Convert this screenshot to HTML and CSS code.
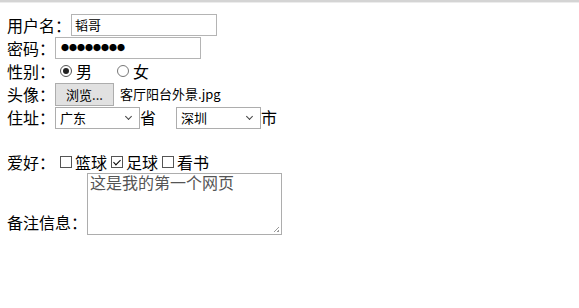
FILE: index.html
```html
<!DOCTYPE html>
<html lang="zh-CN">

<head>
    <meta charset="utf-8">
    <title>注册表单</title>
    <link rel="stylesheet" href="styles.css">
</head>

<body>
    <div class="topbar"></div>
    <form class="form">
        <div class="row">
            <label>用户名：</label><span class="text name">韬哥</span>
        </div>
        <div class="row">
            <label>密码：</label><span class="text pwd">●●●●●●●●</span>
        </div>
        <div class="row">
            <label>性别：</label>
            <span class="radio checked"></span><span>男</span>
            <span class="radio gap"></span><span>女</span>
        </div>
        <div class="row">
            <label>头像：</label><span class="file-btn">浏览...</span><span class="file-name">客厅阳台外景.jpg</span>
        </div>
        <div class="row">
            <label>住址：</label><span class="select">广东<i class="arrow"></i></span><span>省</span>
            <span class="select city">深圳<i class="arrow"></i></span><span>市</span>
        </div>
        <div class="row empty"></div>
        <div class="row">
            <label>爱好：</label>
            <span class="check"></span><span>篮球</span>
            <span class="check checked"></span><span>足球</span>
            <span class="check"></span><span>看书</span>
        </div>
        <div class="row note">
            <label>备注信息：</label>
            <div class="textarea">这是我的第一个网页<i class="grip"></i></div>
        </div>
    </form>
</body>

</html>
```

FILE: styles.css
```css
body {
    margin: 0;
    font-family: "Noto Sans CJK SC", sans-serif;
    font-size: 16px;
    color: #000;
    background: #fff;
}

.topbar {
    height: 2px;
    background: #d4d4d4;
    border-bottom: 1px solid #ececec;
}

.form {
    padding: 10px 0 0 7px;
}

.row {
    display: flex;
    align-items: center;
    height: 23px;
}

.row.empty {
    height: 22px;
}

.text {
    box-sizing: border-box;
    height: 22px;
    border: 1px solid #b4b4b4;
    padding: 0 3px;
    font-size: 13px;
    display: flex;
    align-items: center;
}

.name {
    width: 146px;
}

.pwd {
    width: 146px;
    font-size: 8px;
    padding-left: 5px;
}

.radio {
    box-sizing: border-box;
    width: 12px;
    height: 12px;
    border: 1px solid #555;
    border-radius: 50%;
    margin: 0 4px 0 5px;
    position: relative;
}

.radio.checked::after {
    content: "";
    position: absolute;
    left: 2px;
    top: 2px;
    width: 6px;
    height: 6px;
    border-radius: 50%;
    background: #222;
}

.radio.gap {
    margin-left: 25px;
    border-color: #777;
}

.file-btn {
    box-sizing: border-box;
    height: 23px;
    width: 59px;
    border: 1px solid #adadad;
    background: #e1e1e1;
    font-size: 13px;
    display: flex;
    align-items: center;
    justify-content: center;
    margin-top: 1px;
}

.file-name {
    font-size: 13px;
    margin-left: 6px;
}

.select {
    box-sizing: border-box;
    width: 85px;
    height: 22px;
    border: 1px solid #adadad;
    font-size: 13px;
    padding-left: 4px;
    display: flex;
    align-items: center;
    position: relative;
    margin-top: 2px;
}

.select.city {
    margin-left: 20px;
}

.arrow {
    position: absolute;
    right: 8px;
    top: 6px;
    width: 4px;
    height: 4px;
    border-right: 1px solid #444;
    border-bottom: 1px solid #444;
    transform: rotate(45deg);
}

.check {
    box-sizing: border-box;
    width: 12px;
    height: 12px;
    border: 1px solid #555;
    margin: 0 3px 0 5px;
    position: relative;
}

.check + span + .check {
    margin-left: 4px;
}

.check.checked::after {
    content: "";
    position: absolute;
    left: 3px;
    top: 1px;
    width: 3px;
    height: 6px;
    border-right: 1px solid #000;
    border-bottom: 1px solid #000;
    transform: rotate(45deg);
}

.note {
    height: auto;
    align-items: flex-end;
}

.note label {
    margin-bottom: 1px;
}

.textarea {
    box-sizing: border-box;
    width: 195px;
    height: 62px;
    border: 1px solid #adadad;
    padding: 1px 2px;
    font-family: "Liberation Serif", "Noto Sans CJK SC", serif;
    font-size: 16px;
    line-height: 18px;
    color: #555;
    position: relative;
}

.grip {
    position: absolute;
    right: 2px;
    bottom: 2px;
    width: 6px;
    height: 6px;
    background: linear-gradient(135deg, transparent 55%, #999 55%, #999 65%, transparent 65%, transparent 80%, #999 80%);
}
```
